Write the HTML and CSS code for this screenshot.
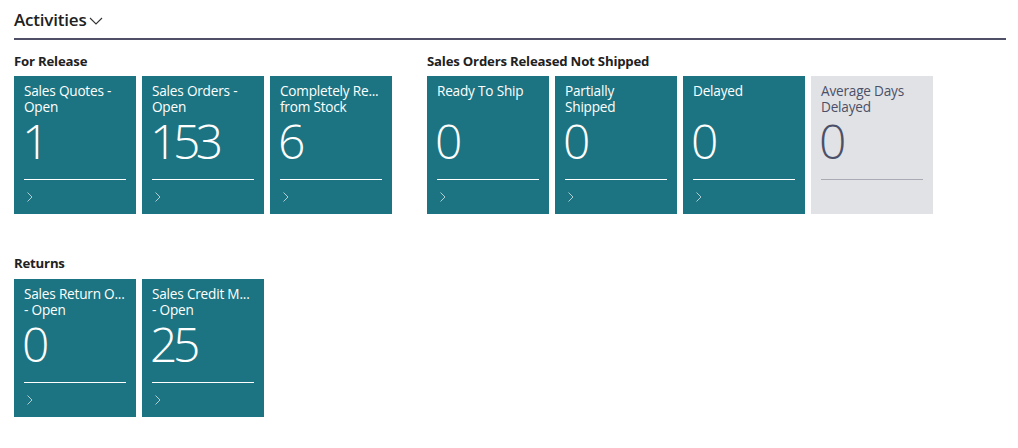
FILE: index.html
```html
<!DOCTYPE html>
<html>
<head>
<meta charset="utf-8">
<link rel="stylesheet" href="styles.css">
</head>
<body>
<div class="page">
  <div class="header">
    <span class="header-title">Activities</span>
    <svg class="header-chev" width="14" height="10" viewBox="0 0 14 10"><path d="M1 2 L7 8 L13 2" fill="none" stroke="#333" stroke-width="1.1"/></svg>
  </div>
  <div class="row">
    <div class="group">
      <div class="group-title">For Release</div>
      <div class="tiles">
        <div class="tile"><div class="t-title">Sales Quotes -<br>Open</div><div class="t-num">1</div><div class="t-line"></div><svg class="t-chev" width="8" height="12" viewBox="0 0 8 12"><path d="M1.5 1.5 L6 6 L1.5 10.5" fill="none" stroke="currentColor" stroke-width="1"/></svg></div>
        <div class="tile"><div class="t-title">Sales Orders -<br>Open</div><div class="t-num">153</div><div class="t-line"></div><svg class="t-chev" width="8" height="12" viewBox="0 0 8 12"><path d="M1.5 1.5 L6 6 L1.5 10.5" fill="none" stroke="currentColor" stroke-width="1"/></svg></div>
        <div class="tile"><div class="t-title">Completely Re...<br>from Stock</div><div class="t-num">6</div><div class="t-line"></div><svg class="t-chev" width="8" height="12" viewBox="0 0 8 12"><path d="M1.5 1.5 L6 6 L1.5 10.5" fill="none" stroke="currentColor" stroke-width="1"/></svg></div>
      </div>
    </div>
    <div class="group">
      <div class="group-title">Sales Orders Released Not Shipped</div>
      <div class="tiles">
        <div class="tile"><div class="t-title">Ready To Ship</div><div class="t-num">0</div><div class="t-line"></div><svg class="t-chev" width="8" height="12" viewBox="0 0 8 12"><path d="M1.5 1.5 L6 6 L1.5 10.5" fill="none" stroke="currentColor" stroke-width="1"/></svg></div>
        <div class="tile"><div class="t-title">Partially<br>Shipped</div><div class="t-num">0</div><div class="t-line"></div><svg class="t-chev" width="8" height="12" viewBox="0 0 8 12"><path d="M1.5 1.5 L6 6 L1.5 10.5" fill="none" stroke="currentColor" stroke-width="1"/></svg></div>
        <div class="tile"><div class="t-title">Delayed</div><div class="t-num">0</div><div class="t-line"></div><svg class="t-chev" width="8" height="12" viewBox="0 0 8 12"><path d="M1.5 1.5 L6 6 L1.5 10.5" fill="none" stroke="currentColor" stroke-width="1"/></svg></div>
        <div class="tile gray"><div class="t-title">Average Days<br>Delayed</div><div class="t-num">0</div><div class="t-line"></div></div>
      </div>
    </div>
  </div>
  <div class="row returns">
    <div class="group">
      <div class="group-title">Returns</div>
      <div class="tiles">
        <div class="tile"><div class="t-title">Sales Return O...<br>- Open</div><div class="t-num">0</div><div class="t-line"></div><svg class="t-chev" width="8" height="12" viewBox="0 0 8 12"><path d="M1.5 1.5 L6 6 L1.5 10.5" fill="none" stroke="currentColor" stroke-width="1"/></svg></div>
        <div class="tile"><div class="t-title">Sales Credit M...<br>- Open</div><div class="t-num">25</div><div class="t-line"></div><svg class="t-chev" width="8" height="12" viewBox="0 0 8 12"><path d="M1.5 1.5 L6 6 L1.5 10.5" fill="none" stroke="currentColor" stroke-width="1"/></svg></div>
      </div>
    </div>
  </div>
</div>
</body>
</html>
```
FILE: styles.css
```css
html, body { margin: 0; padding: 0; background: #fff; }
body { font-family: "Open Sans", "Noto Sans", sans-serif; color: #212121; }
.page { padding: 0 12px 0 14px; }
.header {
  height: 38px;
  border-bottom: 2px solid #4f5068;
  display: flex;
  align-items: center;
  gap: 2px;
}
.header-title { font-size: 17px; font-weight: 600; color: #212121; letter-spacing: -0.2px; }
.header-chev { margin-top: 3px; }
.row { display: flex; gap: 35px; margin-top: 12px; }
.row.returns { margin-top: 40px; }
.group-title { font-size: 13.2px; font-weight: 700; height: 24px; line-height: 18px; letter-spacing: -0.2px; }
.returns .group-title { height: 25px; }
.tiles { display: flex; gap: 6px; }
.tile {
  width: 122px; height: 138px; box-sizing: border-box;
  background: #1c7482; color: #fff;
  padding: 7px 10px 0 10px;
  display: flex; flex-direction: column;
}
.t-title { font-size: 13.6px; line-height: 16px; height: 32px; letter-spacing: -0.2px; white-space: nowrap; }
.t-num { font-size: 48px; font-weight: 300; line-height: 52px; height: 58px; margin-left: -2px; letter-spacing: -4.5px; }
.t-line { height: 1px; background: #fff; margin-top: 6px; flex: none; }
.t-chev { color: rgba(255,255,255,0.65); margin-top: 11px; margin-left: 2px; flex: none; }
.tile.gray { background: #e1e2e6; color: #4b5068; }
.tile.gray .t-line { background: #a9abb4; }
```
